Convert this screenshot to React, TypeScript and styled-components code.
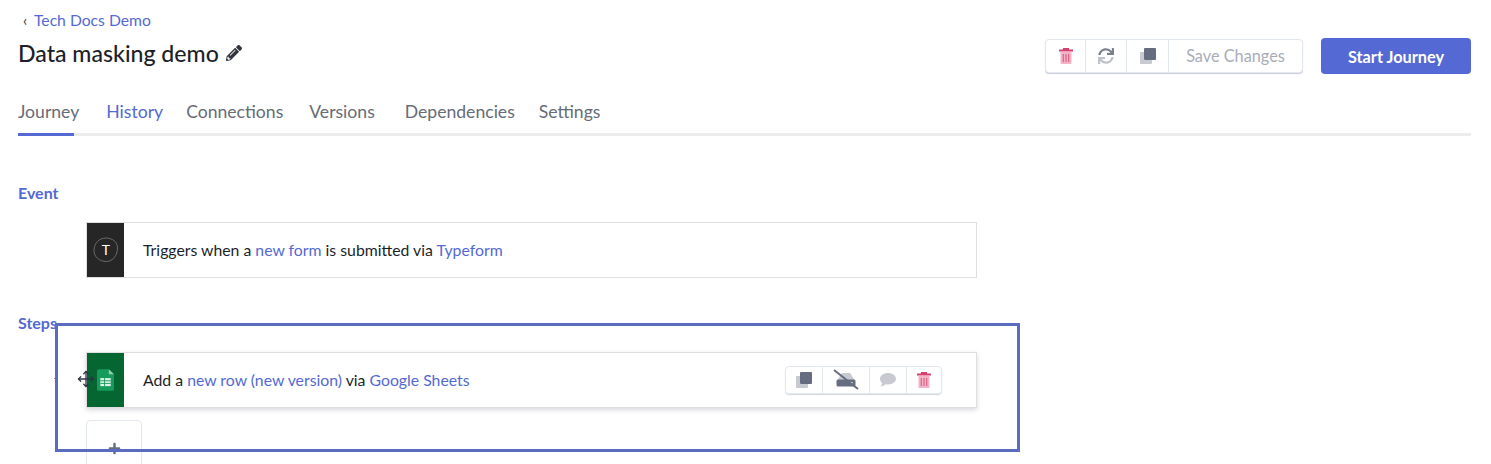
import React from "react";
import styled, { createGlobalStyle } from "styled-components";
import { FaPencilAlt, FaPlus, FaSync } from "react-icons/fa";
import { Move } from "lucide-react";

const GlobalStyle = createGlobalStyle`
  html, body {
    margin: 0;
    padding: 0;
    height: 464px;
    overflow: hidden;
    background: #fff;
    font-family: "Lato", "Liberation Sans", sans-serif;
  }
`;

const TrashIcon = ({ size = 16 }: { size?: number }) => (
  <svg width={size} height={size} viewBox="0 0 16 16">
    <rect x="1" y="1.500" width="14" height="2" fill="#d6406f" />
    <rect x="5" y="0" width="6" height="2" fill="#d6406f" />
    <path d="M2.500 4h11v11a1 1 0 0 1-1 1h-9a1 1 0 0 1-1-1z" fill="#f2b3c6" />
    <path d="M5.300 6v8M8 6v8M10.700 6v8" stroke="#d6406f" strokeWidth="1.100" opacity="0.75" />
  </svg>
);

const CopyIcon = () => (
  <svg width="16" height="16" viewBox="0 0 16 16">
    <path d="M0 5a1 1 0 0 1 1-1h3v8h8v3a1 1 0 0 1-1 1H1a1 1 0 0 1-1-1z" fill="#c7cad1" />
    <rect x="4" y="0" width="12" height="12" rx="1" fill="#666d80" />
  </svg>
);

// top arrow darker than the bottom one, like the duotone original
const SyncIcon = () => (
  <>
    <svg width="0" height="0">
      <defs>
        <linearGradient id="syncTone" x1="0" y1="0" x2="0" y2="1">
          <stop offset="0.5" stopColor="#7b808d" />
          <stop offset="0.5" stopColor="#bfc2ca" />
        </linearGradient>
      </defs>
    </svg>
    <FaSync size={16} fill="url(#syncTone)" />
  </>
);

const HiddenDriveIcon = () => (
  <svg width="26" height="22" viewBox="0 0 26 22">
    <path d="M9 4h8l5 7.500H4z" fill="#c7cad1" />
    <path d="M5 10.500h16a1.500 1.500 0 0 1 1.500 1.500v4a1.500 1.500 0 0 1-1.500 1.500H5A1.500 1.500 0 0 1 3.500 16v-4A1.500 1.500 0 0 1 5 10.500z" fill="#666d80" />
    <rect x="17" y="13" width="2.500" height="1.500" fill="#fff" />
    <path d="M1 1l24 19" stroke="#666d80" strokeWidth="2" />
  </svg>
);

const CommentIcon = () => (
  <svg width="16" height="14" viewBox="0 0 16 14">
    <path d="M8 0c4.400 0 8 2.500 8 5.700s-3.600 5.700-8 5.700c-.8 0-1.600-.1-2.300-.2C4.500 12.400 2.800 13.400.5 13.500c1-.9 1.600-2 1.700-3.400C.8 9 0 7.500 0 5.700 0 2.500 3.600 0 8 0z" fill="#c7cad1" />
  </svg>
);

const SheetsIcon = () => (
  <svg width="17" height="22" viewBox="0 0 18 23">
    <path d="M2 0h10.500L18 5.500V21a2 2 0 0 1-2 2H2a2 2 0 0 1-2-2V2a2 2 0 0 1 2-2z" fill="#169b5c" />
    <path d="M12.500 0L18 5.500h-5.500z" fill="#8fd0ad" />
    <path d="M3.500 9.500h11v8.500h-11z" fill="#dff3e8" />
    <path d="M3.500 12.300h11M3.500 15.100h11M8 9.500v8.500" stroke="#169b5c" strokeWidth="1" />
  </svg>
);

const TypeformIcon = () => (
  <svg width="26" height="26" viewBox="0 0 26 26">
    <path
      d="M13 1c6 0 11.500 3.500 11.500 10 0 7-4.500 13.500-11 13.500C6.500 24.500 1 20 1 13.500 1 6 6.500 1 13 1z"
      fill="none"
      stroke="#6b6b6b"
      strokeWidth="1"
    />
    <text x="13" y="18" textAnchor="middle" fontSize="14" fontFamily="Lato, sans-serif" fill="#fff">
      T
    </text>
  </svg>
);

export default function App() {
  return (
    <Page>
      <GlobalStyle />
      <BackRow>
        <Chevron>‹</Chevron>
        <BackLink>Tech Docs Demo</BackLink>
      </BackRow>

      <HeaderRow>
        <Title>
          Data masking demo <FaPencilAlt size={16} color="#33363f" />
        </Title>
        <Actions>
          <ButtonGroup>
            <IconBtn $w={40}>
              <TrashIcon />
            </IconBtn>
            <IconBtn $w={41}>
              <SyncIcon />
            </IconBtn>
            <IconBtn $w={42}>
              <CopyIcon />
            </IconBtn>
            <SaveBtn>Save Changes</SaveBtn>
          </ButtonGroup>
          <StartBtn>Start Journey</StartBtn>
        </Actions>
      </HeaderRow>

      <Tabs>
        <Tab $active $gap={27}>Journey</Tab>
        <Tab $link $gap={23}>History</Tab>
        <Tab $gap={26}>Connections</Tab>
        <Tab $gap={30}>Versions</Tab>
        <Tab $gap={24}>Dependencies</Tab>
        <Tab>Settings</Tab>
      </Tabs>

      <SectionLabel $top={48}>Event</SectionLabel>
      <Card>
        <CardLogo $bg="#262626">
          <TypeformIcon />
        </CardLogo>
        <CardText>
          Triggers when a <Link>new form</Link> is submitted via <Link>Typeform</Link>
        </CardText>
      </Card>

      <SectionLabel $top={36}>Steps</SectionLabel>
      <Card $raised>
        <GutterTick />
        <CardLogo $bg="#056632">
          <SheetsIcon />
        </CardLogo>
        <CardText>
          Add a <Link>new row (new version)</Link> via <Link>Google Sheets</Link>
        </CardText>
        <StepTools>
          <ToolBtn $w={37}>
            <CopyIcon />
          </ToolBtn>
          <ToolBtn $w={47}>
            <HiddenDriveIcon />
          </ToolBtn>
          <ToolBtn $w={37}>
            <CommentIcon />
          </ToolBtn>
          <ToolBtn $w={34}>
            <TrashIcon />
          </ToolBtn>
        </StepTools>
        <DragCursor>
          <Move size={18} strokeWidth={1.700} color="#2f3542" />
        </DragCursor>
      </Card>
      <AddBtn>
        <FaPlus size={13} color="#666d80" />
      </AddBtn>

      <Highlight />
    </Page>
  );
}

const Page = styled.div`
  position: relative;
  height: 464px;
  overflow: hidden;
  padding: 11px 20px 0 18px;
  box-sizing: border-box;
`;

const BackRow = styled.div`
  display: flex;
  align-items: center;
  height: 18px;
  padding-left: 5px;
  font-size: 15.700px;
`;

const Chevron = styled.span`
  width: 11px;
  color: #30343f;
  font-size: 15px;
`;

const BackLink = styled.a`
  color: #5469d4;
`;

const HeaderRow = styled.div`
  display: flex;
  justify-content: space-between;
  align-items: flex-start;
  margin-top: 8px;
`;

const Title = styled.h1`
  display: flex;
  align-items: center;
  gap: 7px;
  margin: 0;
  height: 32px;
  font-size: 23.100px;
  font-weight: 500;
  color: #1c1f2a;
`;

const Actions = styled.div`
  display: flex;
  align-items: center;
  gap: 18px;
  padding-top: 1px;
`;

const ButtonGroup = styled.div`
  display: flex;
  height: 32px;
  border: 1px solid #e3e7ef;
  border-radius: 4px;
  box-shadow: 0 1px 1px #c9ccd4;
  background: #fff;
`;

const IconBtn = styled.div<{ $w: number }>`
  display: flex;
  align-items: center;
  justify-content: center;
  width: ${({ $w }) => $w}px;
  border-right: 1px solid #e3e7ef;
  box-sizing: border-box;
`;

const SaveBtn = styled.div`
  display: flex;
  align-items: center;
  justify-content: center;
  width: 133px;
  padding-bottom: 2px;
  box-sizing: border-box;
  font-size: 16.300px;
  color: #a9adb8;
`;

const StartBtn = styled.button`
  width: 150px;
  height: 36px;
  border: 0;
  border-radius: 4px;
  background: #5469d4;
  color: #fff;
  font-family: inherit;
  font-size: 16.300px;
  font-weight: 700;
`;

const Tabs = styled.div`
  display: flex;
  height: 44px;
  margin-top: 15px;
  border-bottom: 3px solid #ececec;
`;

const Tab = styled.div<{ $active?: boolean; $link?: boolean; $gap?: number }>`
  position: relative;
  margin-right: ${({ $gap }) => $gap ?? 0}px;
  padding-top: 12px;
  font-size: 17.600px;
  color: ${({ $link }) => ($link ? "#5469d4" : "#666c78")};

  ${({ $active }) =>
    $active &&
    `&::after {
      content: "";
      position: absolute;
      left: 0;
      bottom: -3px;
      width: 56px;
      height: 3px;
      background: #5469d4;
    }`}
`;

const SectionLabel = styled.div<{ $top: number }>`
  height: 18px;
  margin-top: ${({ $top }) => $top}px;
  font-size: 16px;
  line-height: 18px;
  font-weight: 700;
  color: #5469d4;
`;

const Card = styled.div<{ $raised?: boolean }>`
  position: relative;
  display: flex;
  align-items: center;
  width: 891px;
  height: 56px;
  margin: 20px 0 0 68px;
  border: 1px solid #dfdfe2;
  background: #fff;
  box-sizing: border-box;
  ${({ $raised }) => $raised && "box-shadow: 0 2px 5px rgba(60, 66, 87, 0.2);"}
`;

const CardLogo = styled.div<{ $bg: string }>`
  display: flex;
  align-items: center;
  justify-content: center;
  align-self: stretch;
  width: 37px;
  background: ${({ $bg }) => $bg};
`;

const CardText = styled.div`
  flex: 1;
  margin-left: 19px;
  padding-bottom: 1px;
  font-size: 15.800px;
  color: #1c1f2a;
`;

const Link = styled.span`
  color: #5469d4;
`;

const StepTools = styled.div`
  display: flex;
  height: 26px;
  margin-right: 34px;
  border: 1px solid #e3e7ef;
  border-radius: 4px;
  box-shadow: 0 1px 1px #d3d6dc;
`;

const ToolBtn = styled.div<{ $w: number }>`
  display: flex;
  align-items: center;
  justify-content: center;
  width: ${({ $w }) => $w}px;
  border-right: 1px solid #e3e7ef;
  box-sizing: border-box;

  &:last-child {
    border-right: 0;
  }
`;

const GutterTick = styled.span`
  position: absolute;
  left: -33px;
  top: 25px;
  width: 2px;
  height: 1px;
  background: #b98d7c;
`;

const DragCursor = styled.div`
  position: absolute;
  left: -10px;
  top: 17px;
  line-height: 0;
`;

const AddBtn = styled.div`
  display: flex;
  align-items: center;
  justify-content: center;
  width: 56px;
  height: 56px;
  margin: 12px 0 0 68px;
  border: 1px solid #e3e7ef;
  border-radius: 4px;
  box-sizing: border-box;
`;

const Highlight = styled.div`
  position: absolute;
  left: 55px;
  top: 323px;
  width: 965px;
  height: 129px;
  border: 3px solid #5b6bc0;
  box-sizing: border-box;
  pointer-events: none;
`;
